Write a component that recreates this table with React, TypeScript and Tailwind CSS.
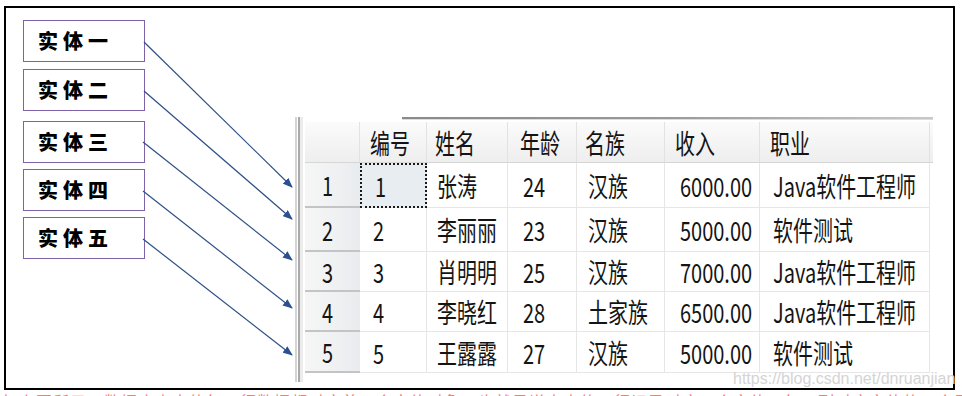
const entities = [
  { label: "实体一", cls: "mt-0" },
  { label: "实体二", cls: "mt-[7px]" },
  { label: "实体三", cls: "mt-[10px]" },
  { label: "实体四", cls: "mt-[6px]" },
  { label: "实体五", cls: "mt-[6px]" },
];

const headers = [
  { text: "", pad: "" },
  { text: "编号", pad: "pl-[10px]" },
  { text: "姓名", pad: "pl-[8px]" },
  { text: "年龄", pad: "pl-[12px]" },
  { text: "名族", pad: "pl-[8px]" },
  { text: "收入", pad: "pl-[10px]" },
  { text: "职业", pad: "pl-[10px]" },
];

const bodyPad = ["pl-[17px]", "pl-[13px]", "pl-[10px]", "pl-[15px]", "pl-[11px]", "pl-[15px]", "pl-[13px]"];

const rows = [
  { h: "h-[45px]", cells: ["1", "1", "张涛", "24", "汉族", "6000.00", "Java软件工程师"] },
  { h: "h-[44px]", cells: ["2", "2", "李丽丽", "23", "汉族", "5000.00", "软件测试"] },
  { h: "h-[40px]", cells: ["3", "3", "肖明明", "25", "汉族", "7000.00", "Java软件工程师"] },
  { h: "h-[40px]", cells: ["4", "4", "李晓红", "28", "土家族", "6500.00", "Java软件工程师"] },
  { h: "h-[41px]", cells: ["5", "5", "王露露", "27", "汉族", "5000.00", "软件测试"] },
];

// start point on entity box, tip at the row
const arrows = [
  [144, 42, 292, 187],
  [144, 91, 292, 219],
  [143, 142, 292, 260],
  [143, 191, 292, 308],
  [143, 239, 292, 355],
];

const gridCols = "grid grid-cols-[55px_67px_81px_69px_88px_95px_170px]";

function Txt({ children }: { children: string }) {
  return (
    <span className="inline-block origin-left scale-x-[0.74] whitespace-nowrap text-[27px] leading-none text-[#141414]">
      {children}
    </span>
  );
}

export default function App() {
  return (
    <div className="relative h-[396px] w-[962px] overflow-hidden bg-white font-['Noto_Sans_CJK_SC',sans-serif]">
      <div className="ml-[4px] mt-[6px] flex h-[384px] w-[951px] border-2 border-black">
        {/* entity boxes */}
        <div className="ml-[17px] mt-[12px] flex w-[122px] shrink-0 flex-col">
          {entities.map((e) => (
            <div
              key={e.label}
              className={`${e.cls} flex h-[42px] items-center border border-[#7f63a8] pl-[14px] text-[20px] font-black leading-none tracking-[5px] text-black`}
            >
              {e.label}
            </div>
          ))}
        </div>

        {/* grid screenshot */}
        <div className="ml-[150px] mt-[109px] flex h-[265px]">
          <div className="flex h-full w-[10px] shrink-0">
            <div className="w-[2px] bg-[#d4d4d4]" />
            <div className="w-[1px] bg-white" />
            <div className="w-[2px] bg-[#a9a9a9]" />
            <div className="w-[3px] bg-[#ececec]" />
            <div className="w-[2px] bg-white" />
          </div>
          <div className="flex flex-col">
            <div className="h-[5px]">
              <div className="ml-[97px] h-[2px] w-[531px] bg-gradient-to-r from-[#8a8a8a] via-[#9a9a9a] to-[#c8c8c8]" />
              <div className="ml-[97px] h-[1px] w-[531px] bg-[#dcdcdc]" />
            </div>
            <div className={`${gridCols} h-[41px] border-b border-[#d6d6d6] bg-gradient-to-b from-[#fbfbfb] to-[#eeeeee]`}>
              {headers.map((h, i) => (
                <div key={i} className={`flex items-center border-r border-[#e2e2e2] ${h.pad}`}>
                  {h.text && <Txt>{h.text}</Txt>}
                </div>
              ))}
            </div>
            {rows.map((r, ri) => (
              <div key={ri} className={`${gridCols} ${r.h}`}>
                {r.cells.map((c, ci) => {
                  const focus = ri === 0 && ci === 1;
                  const rowHead = ci === 0;
                  return (
                    <div
                      key={ci}
                      className={`flex items-center ${bodyPad[ci]} ${
                        rowHead
                          ? "border-b-2 border-[#c4c4c4] bg-gradient-to-r from-[#f6f6f6] to-[#e9ecef]"
                          : focus
                            ? "border-2 border-dotted border-[#1a1a1a] bg-[#e8edf1]"
                            : "border-b border-r border-[#e6e6e6]"
                      }`}
                    >
                      <Txt>{c}</Txt>
                    </div>
                  );
                })}
              </div>
            ))}
          </div>
        </div>
      </div>

      {/* cut-off caption line, only the tops of the glyphs show */}
      <div className="h-[6px] overflow-hidden pl-[2px]">
        <p className="mt-[3px] whitespace-nowrap text-[16px] leading-[16px] tracking-[1px] text-[#e98080]">
          如上图所示，数据库表中的每一行数据都对应着一个实体对象，也就是说表中的一行记录对应一个实体，每一列对应实体的一个属性。
        </p>
      </div>

      {/* arrows */}
      <svg className="pointer-events-none absolute left-0 top-0" width="962" height="396">
        <defs>
          <marker id="ah" markerWidth="10" markerHeight="8" refX="9" refY="4" orient="auto" markerUnits="userSpaceOnUse">
            <path d="M0,0 L10,4 L0,8 Z" fill="#2a5090" />
          </marker>
        </defs>
        {arrows.map(([x1, y1, x2, y2], i) => (
          <line key={i} x1={x1} y1={y1} x2={x2} y2={y2} stroke="#2e4f86" strokeWidth="1.2" markerEnd="url(#ah)" />
        ))}
      </svg>

      <div className="pointer-events-none absolute left-[733px] top-[371px] font-['Liberation_Sans',Arial,sans-serif] text-[16px] leading-[16px] text-[#d4d4d4]">
        https://blog.csdn.net/dnruanjian
      </div>
    </div>
  );
}
